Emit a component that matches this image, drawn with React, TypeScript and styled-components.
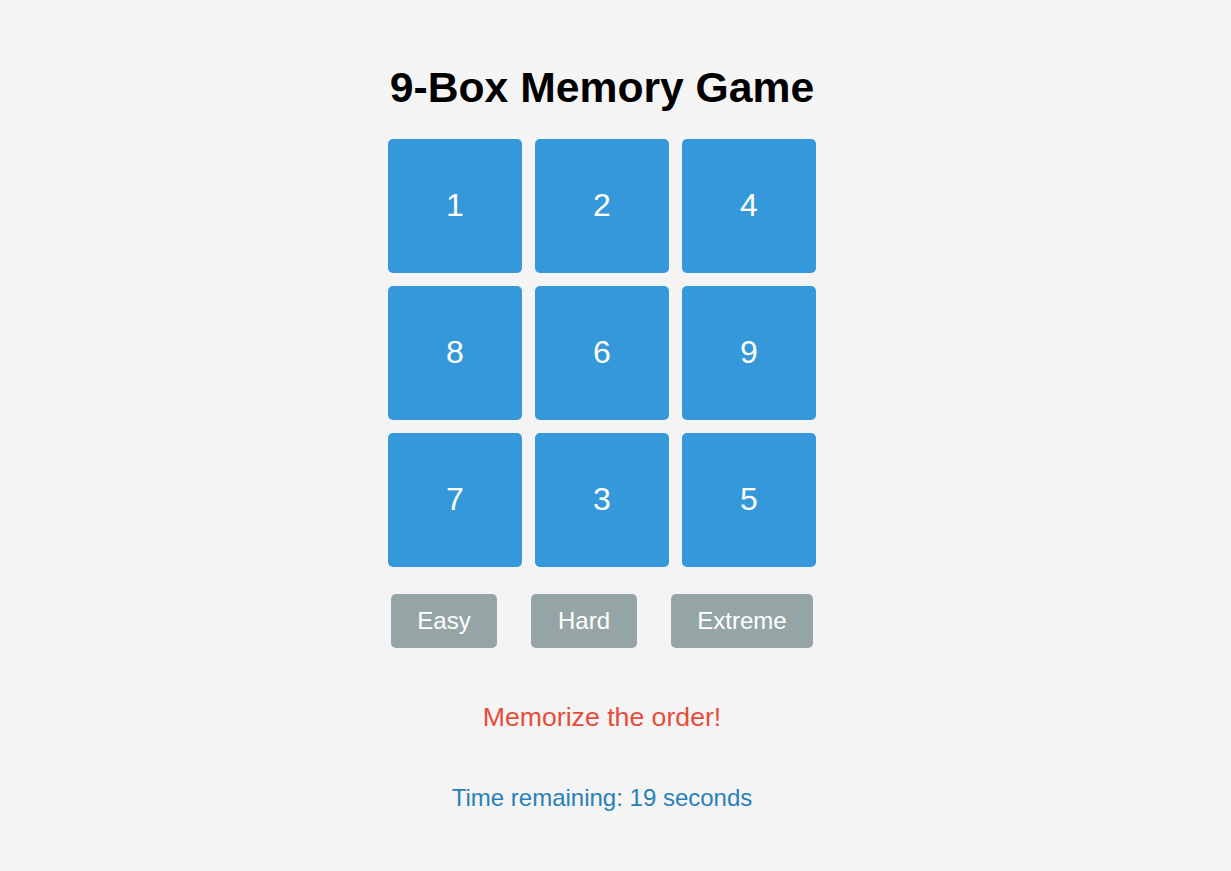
import styled, { createGlobalStyle } from "styled-components"

const GlobalStyle = createGlobalStyle`
    html, body {
        margin: 0;
        padding: 0;
        background: #f4f4f4;
        font-family: "Liberation Sans", Arial, sans-serif;
    }
`

const Page = styled.div`
    display: flex;
    flex-direction: column;
    align-items: center;
    padding: 63px 27px 40px 0;
    min-height: 871px;
    box-sizing: border-box;
`

const Title = styled.h1`
    margin: 0 0 27px;
    font-size: 42.67px;
    font-weight: bold;
    line-height: 49px;
    color: #000;
`

const Grid = styled.div`
    display: grid;
    grid-template-columns: repeat(3, 134px);
    grid-auto-rows: 134px;
    gap: 13px;
    margin-bottom: 27px;
`

const Box = styled.div`
    display: flex;
    align-items: center;
    justify-content: center;
    padding-bottom: 2px;
    box-sizing: border-box;
    background: #3498db;
    border-radius: 5px;
    color: #fff;
    font-size: 32px;
    cursor: pointer;
`

const Levels = styled.div`
    display: flex;
    gap: 34px;
`

const LevelButton = styled.button`
    height: 54px;
    padding: 0 26.67px;
    border: none;
    border-radius: 5px;
    background: #95a5a6;
    color: #fff;
    font-family: inherit;
    font-size: 24px;
    cursor: pointer;
`

const Message = styled.p`
    margin: 54px 0 0;
    font-size: 26.67px;
    line-height: 31px;
    color: #e74c3c;
`

const Timer = styled.p`
    margin: 51px 0 0;
    font-size: 24px;
    line-height: 28px;
    color: #2980b9;
`

const numbers = [1, 2, 4, 8, 6, 9, 7, 3, 5]
const levels = ["Easy", "Hard", "Extreme"]

export default function App() {
    return (
        <>
            <GlobalStyle />
            <Page>
                <Title>9-Box Memory Game</Title>
                <Grid>
                    {numbers.map((n) => (
                        <Box key={n}>{n}</Box>
                    ))}
                </Grid>
                <Levels>
                    {levels.map((l) => (
                        <LevelButton key={l}>{l}</LevelButton>
                    ))}
                </Levels>
                <Message>Memorize the order!</Message>
                <Timer>Time remaining: 19 seconds</Timer>
            </Page>
        </>
    )
}
